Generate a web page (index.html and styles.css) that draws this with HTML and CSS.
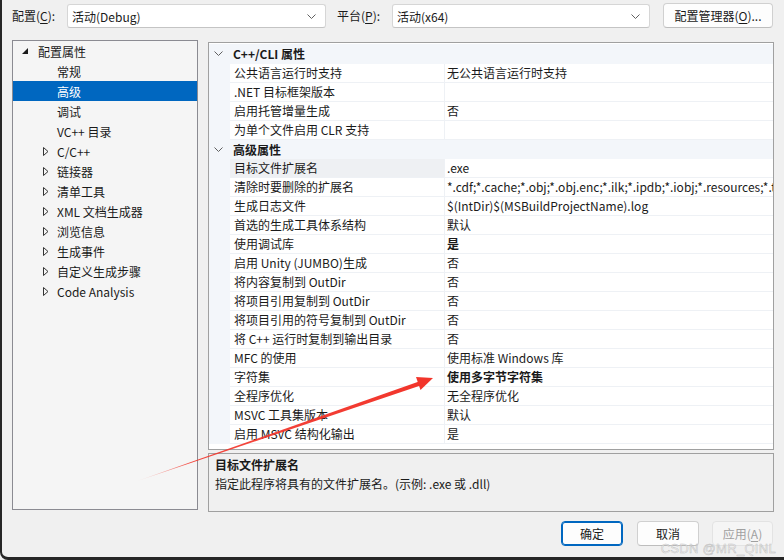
FILE: index.html
```html
<!DOCTYPE html>
<html lang="zh-CN">
<head>
    <meta charset="UTF-8">
    <title>高级 属性页</title>
    <link rel="stylesheet" href="styles.css">
</head>
<body>
<div class="window">

    <!-- configuration / platform selectors -->
    <div class="topbar">
        <span class="label">配置(<u>C</u>):</span>
        <div class="combo combo-config">
            <span>活动(Debug)</span>
            <svg class="chev" width="9" height="5" viewBox="0 0 9 5"><polyline points="0.5,0.5 4.5,4.5 8.5,0.5"/></svg>
        </div>
        <span class="label label-platform">平台(<u>P</u>):</span>
        <div class="combo combo-platform">
            <span>活动(x64)</span>
            <svg class="chev" width="9" height="5" viewBox="0 0 9 5"><polyline points="0.5,0.5 4.5,4.5 8.5,0.5"/></svg>
        </div>
        <button class="btn btn-manager">配置管理器(<u>O</u>)...</button>
    </div>

    <div class="main">
        <!-- left tree -->
        <div class="tree">
            <div class="node root">
                <svg class="toggle" width="16" height="7" viewBox="0 0 16 7"><polygon points="6,0 6,6 0,6"/></svg>
                <span>配置属性</span>
            </div>
            <div class="node leaf">常规</div>
            <div class="node leaf selected">高级</div>
            <div class="node leaf">调试</div>
            <div class="node leaf">VC++ 目录</div>
            <div class="node child"><svg class="toggle" width="14" height="9" viewBox="0 0 14 9"><polygon points="0.5,0.5 5,4.5 0.5,8.5"/></svg><span>C/C++</span></div>
            <div class="node child"><svg class="toggle" width="14" height="9" viewBox="0 0 14 9"><polygon points="0.5,0.5 5,4.5 0.5,8.5"/></svg><span>链接器</span></div>
            <div class="node child"><svg class="toggle" width="14" height="9" viewBox="0 0 14 9"><polygon points="0.5,0.5 5,4.5 0.5,8.5"/></svg><span>清单工具</span></div>
            <div class="node child"><svg class="toggle" width="14" height="9" viewBox="0 0 14 9"><polygon points="0.5,0.5 5,4.5 0.5,8.5"/></svg><span>XML 文档生成器</span></div>
            <div class="node child"><svg class="toggle" width="14" height="9" viewBox="0 0 14 9"><polygon points="0.5,0.5 5,4.5 0.5,8.5"/></svg><span>浏览信息</span></div>
            <div class="node child"><svg class="toggle" width="14" height="9" viewBox="0 0 14 9"><polygon points="0.5,0.5 5,4.5 0.5,8.5"/></svg><span>生成事件</span></div>
            <div class="node child"><svg class="toggle" width="14" height="9" viewBox="0 0 14 9"><polygon points="0.5,0.5 5,4.5 0.5,8.5"/></svg><span>自定义生成步骤</span></div>
            <div class="node child"><svg class="toggle" width="14" height="9" viewBox="0 0 14 9"><polygon points="0.5,0.5 5,4.5 0.5,8.5"/></svg><span>Code Analysis</span></div>
        </div>

        <div class="right">
            <!-- property grid -->
            <div class="grid">
                <div class="cat">
                    <span class="cat-toggle"><svg width="9" height="5" viewBox="0 0 9 5"><polyline points="0.5,0.5 4.5,4.5 8.5,0.5"/></svg></span>
                    <span>C++/CLI 属性</span>
                </div>
                <div class="prop"><span class="gutter"></span><span class="name">公共语言运行时支持</span><span class="value">无公共语言运行时支持</span></div>
                <div class="prop"><span class="gutter"></span><span class="name">.NET 目标框架版本</span><span class="value"></span></div>
                <div class="prop"><span class="gutter"></span><span class="name">启用托管增量生成</span><span class="value">否</span></div>
                <div class="prop"><span class="gutter"></span><span class="name">为单个文件启用 CLR 支持</span><span class="value"></span></div>

                <div class="cat">
                    <span class="cat-toggle"><svg width="9" height="5" viewBox="0 0 9 5"><polyline points="0.5,0.5 4.5,4.5 8.5,0.5"/></svg></span>
                    <span>高级属性</span>
                </div>
                <div class="prop current"><span class="gutter"></span><span class="name">目标文件扩展名</span><span class="value">.exe</span></div>
                <div class="prop"><span class="gutter"></span><span class="name">清除时要删除的扩展名</span><span class="value">*.cdf;*.cache;*.obj;*.obj.enc;*.ilk;*.ipdb;*.iobj;*.resources;*.tlb;*.tli;*.tlh;*.tmp;*.rsp</span></div>
                <div class="prop"><span class="gutter"></span><span class="name">生成日志文件</span><span class="value">$(IntDir)$(MSBuildProjectName).log</span></div>
                <div class="prop"><span class="gutter"></span><span class="name">首选的生成工具体系结构</span><span class="value">默认</span></div>
                <div class="prop"><span class="gutter"></span><span class="name">使用调试库</span><span class="value bold">是</span></div>
                <div class="prop"><span class="gutter"></span><span class="name">启用 Unity (JUMBO)生成</span><span class="value">否</span></div>
                <div class="prop"><span class="gutter"></span><span class="name">将内容复制到 OutDir</span><span class="value">否</span></div>
                <div class="prop"><span class="gutter"></span><span class="name">将项目引用复制到 OutDir</span><span class="value">否</span></div>
                <div class="prop"><span class="gutter"></span><span class="name">将项目引用的符号复制到 OutDir</span><span class="value">否</span></div>
                <div class="prop"><span class="gutter"></span><span class="name">将 C++ 运行时复制到输出目录</span><span class="value">否</span></div>
                <div class="prop"><span class="gutter"></span><span class="name">MFC 的使用</span><span class="value">使用标准 Windows 库</span></div>
                <div class="prop"><span class="gutter"></span><span class="name">字符集</span><span class="value bold">使用多字节字符集</span></div>
                <div class="prop"><span class="gutter"></span><span class="name">全程序优化</span><span class="value">无全程序优化</span></div>
                <div class="prop"><span class="gutter"></span><span class="name">MSVC 工具集版本</span><span class="value">默认</span></div>
                <div class="prop"><span class="gutter"></span><span class="name">启用 MSVC 结构化输出</span><span class="value">是</span></div>
            </div>

            <!-- description of the current property -->
            <div class="desc">
                <div class="desc-title">目标文件扩展名</div>
                <div class="desc-text">指定此程序将具有的文件扩展名。(示例: .exe 或 .dll)</div>
            </div>
        </div>
    </div>

    <div class="footer">
        <button class="btn btn-default">确定</button>
        <button class="btn">取消</button>
        <button class="btn" disabled>应用(<u>A</u>)</button>
    </div>

    <!-- annotation arrow drawn over the dialog -->
    <svg class="arrow" width="784" height="560" viewBox="0 0 784 560">
        <defs>
            <linearGradient id="fade" x1="135" y1="482" x2="420" y2="383" gradientUnits="userSpaceOnUse">
                <stop offset="0" stop-color="#f2352b" stop-opacity="0"/>
                <stop offset="0.2" stop-color="#f2352b" stop-opacity="0.9"/>
                <stop offset="1" stop-color="#f2352b"/>
            </linearGradient>
        </defs>
        <polygon points="133,482.5 419,381.5 420.5,385.5" fill="url(#fade)"/>
        <polygon points="433,378 416,377 420.5,390" fill="#f2352b"/>
    </svg>

    <div class="watermark">CSDN @MR_QINL</div>
</div>
</body>
</html>
```

FILE: styles.css
```css
body {
    margin: 0;
    background-color: #f0f0f0;
    font-family: "Noto Sans CJK SC", "Noto Sans", sans-serif;
    font-size: 12px;
    color: #1a1a1a;
    overflow: hidden;
}

.window {
    position: relative;
    box-sizing: border-box;
    width: 784px;
    height: 560px;
    border-left: 2px solid #262626;
    border-bottom: 3px solid #262626;
    border-bottom-left-radius: 8px;
    padding-left: 10px;
}

u {
    text-decoration-thickness: 1px;
    text-underline-offset: 2px;
}

/* top bar */
.topbar {
    display: flex;
    align-items: center;
    height: 24px;
    padding-top: 4px;
}

.label {
    width: 55px;
    line-height: 24px;
}

.label-platform {
    margin-left: 11px;
}

.combo {
    box-sizing: border-box;
    height: 24px;
    display: flex;
    align-items: center;
    justify-content: space-between;
    padding: 0 9px 0 4px;
    background-color: #fff;
    border: 1px solid #d6d6d6;
    border-bottom-color: #c4c4c4;
    border-radius: 3px;
}

.combo-config { width: 259px; }
.combo-platform { width: 258px; }

.chev polyline,
.cat-toggle polyline {
    fill: none;
    stroke: #606060;
    stroke-width: 1;
}

.btn {
    box-sizing: border-box;
    height: 25px;
    width: 62px;
    padding: 0;
    font-family: inherit;
    font-size: 12px;
    color: #1a1a1a;
    background-color: #fdfdfd;
    border: 1px solid #d0d0d0;
    border-bottom-color: #bdbdbd;
    border-radius: 4px;
}

.btn-manager {
    width: 110px;
    margin-left: 13px;
    margin-top: -2px;
}

.btn-default {
    border: 1px solid #0067c0;
    box-shadow: inset 0 0 0 1px #0067c0;
}

.btn:disabled {
    color: #a0a0a0;
    background-color: #f5f5f5;
    border-color: #e3e3e3;
}

/* main area */
.main {
    display: flex;
    margin-top: 12px;
}

.tree {
    box-sizing: border-box;
    width: 186px;
    height: 470px;
    background-color: #f5f5f5;
    border: 1px solid #8b8b92;
}

.node {
    display: flex;
    align-items: center;
    height: 20px;
    white-space: nowrap;
}

.node.root { padding-left: 9px; }
.node.child { padding-left: 30px; }
.node.leaf { padding-left: 44px; }

.node.root .toggle polygon { fill: #1a1a1a; }

.node.child .toggle polygon {
    fill: none;
    stroke: #333;
    stroke-width: 1;
}

.node.selected {
    background-color: #0067c0;
    color: #fff;
}

.right {
    display: flex;
    flex-direction: column;
    width: 566px;
    margin-left: 10px;
    margin-top: 2px;
}

.grid {
    box-sizing: border-box;
    height: 408px;
    padding-top: 1px;
    background-color: #fff;
    border: 1px solid #a0a0a0;
    overflow: hidden;
}

.cat {
    display: flex;
    align-items: center;
    height: 19px;
    background-color: #f3f6fa;
    font-weight: bold;
}

.cat:first-child {
    height: 20px;
    padding-bottom: 1px;
    box-sizing: border-box;
}

.cat-toggle {
    display: flex;
    align-items: center;
    width: 24px;
    padding-left: 5px;
    box-sizing: border-box;
}

.prop {
    display: flex;
    height: 19px;
    white-space: nowrap;
}

.gutter {
    width: 21px;
    flex: none;
    background-color: #f3f6fa;
}

.name,
.value {
    box-sizing: border-box;
    line-height: 17px;
    border-bottom: 1px solid #eef1f5;
    overflow: hidden;
}

.name {
    width: 215px;
    flex: none;
    padding-left: 4px;
    border-right: 1px solid #eef1f5;
}

.value {
    flex: 1;
    padding-left: 2px;
}

.prop.current .name {
    background-color: #eef0f3;
}

.bold {
    font-weight: bold;
}

.desc {
    box-sizing: border-box;
    height: 59px;
    margin-top: 3px;
    padding: 1px 6px;
    border: 1px solid #a0a0a0;
}

.desc-title {
    font-weight: bold;
    line-height: 19px;
}

.desc-text {
    line-height: 19px;
}

/* buttons */
.footer {
    display: flex;
    justify-content: flex-end;
    gap: 14px;
    padding-top: 9px;
    padding-right: 11px;
}

.footer .btn:last-child {
    width: 61px;
    margin-left: -1px;
}

.arrow {
    position: absolute;
    left: -2px;
    top: 0;
    pointer-events: none;
}

.watermark {
    position: absolute;
    right: 8px;
    bottom: 1px;
    font-family: "Liberation Sans", sans-serif;
    font-size: 13px;
    letter-spacing: 0.3px;
    color: rgba(255, 255, 255, 0.55);
    -webkit-text-stroke: 0.5px rgba(150, 150, 150, 0.6);
}
```
